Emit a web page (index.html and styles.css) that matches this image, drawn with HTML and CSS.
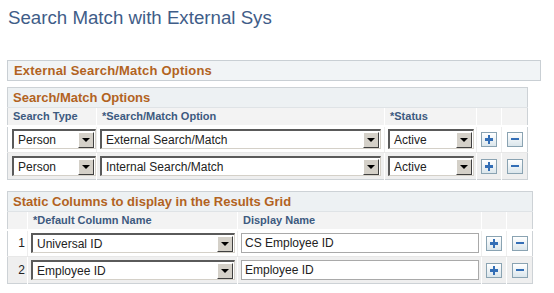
FILE: index.html
```html
<!DOCTYPE html>
<html lang="en">
<head>
    <meta charset="UTF-8">
    <title>Search Match with External Sys</title>
    <link rel="stylesheet" href="styles.css">
</head>
<body>
    <h1 class="page-title">Search Match with External Sys</h1>

    <!-- Group box -->
    <div class="group-box">
        <div class="group-title">External Search/Match Options</div>
    </div>

    <!-- Search/Match Options grid -->
    <table class="grid grid-options">
        <colgroup>
            <col style="width:89px">
            <col style="width:288px">
            <col style="width:92px">
            <col style="width:25px">
            <col style="width:26px">
        </colgroup>
        <tr class="grid-head">
            <th colspan="5">Search/Match Options</th>
        </tr>
        <tr class="col-head">
            <td>Search Type</td>
            <td>*Search/Match Option</td>
            <td>*Status</td>
            <td></td>
            <td></td>
        </tr>
        <tr class="row odd">
            <td><div class="select w-type"><span>Person</span><i class="drop"></i></div></td>
            <td><div class="select w-option"><span>External Search/Match</span><i class="drop"></i></div></td>
            <td><div class="select w-status"><span>Active</span><i class="drop"></i></div></td>
            <td><span class="btn plus"></span></td>
            <td><span class="btn minus"></span></td>
        </tr>
        <tr class="row even">
            <td><div class="select w-type"><span>Person</span><i class="drop"></i></div></td>
            <td><div class="select w-option"><span>Internal Search/Match</span><i class="drop"></i></div></td>
            <td><div class="select w-status"><span>Active</span><i class="drop"></i></div></td>
            <td><span class="btn plus"></span></td>
            <td><span class="btn minus"></span></td>
        </tr>
    </table>

    <!-- Static columns grid -->
    <table class="grid grid-columns">
        <colgroup>
            <col style="width:20px">
            <col style="width:210px">
            <col style="width:244px">
            <col style="width:25px">
            <col style="width:26px">
        </colgroup>
        <tr class="grid-head">
            <th colspan="5">Static Columns to display in the Results Grid</th>
        </tr>
        <tr class="col-head">
            <td></td>
            <td>*Default Column Name</td>
            <td>Display Name</td>
            <td></td>
            <td></td>
        </tr>
        <tr class="row odd">
            <td class="num">1</td>
            <td><div class="select w-column"><span>Universal ID</span><i class="drop"></i></div></td>
            <td><div class="text-input">CS Employee ID</div></td>
            <td><span class="btn plus"></span></td>
            <td><span class="btn minus"></span></td>
        </tr>
        <tr class="row even">
            <td class="num">2</td>
            <td><div class="select w-column"><span>Employee ID</span><i class="drop"></i></div></td>
            <td><div class="text-input">Employee ID</div></td>
            <td><span class="btn plus"></span></td>
            <td><span class="btn minus"></span></td>
        </tr>
    </table>
</body>
</html>
```

FILE: styles.css
```css
* {
    margin: 0;
    padding: 0;
    box-sizing: border-box;
}

body {
    background: #ffffff;
    font-family: "Liberation Sans", Arial, sans-serif;
    color: #000;
    width: 554px;
    height: 293px;
    overflow: hidden;
}

.page-title {
    font-size: 18.7px;
    font-weight: normal;
    color: #3f5d88;
    padding: 7px 0 0 8px;
    height: 60px;
}

/* Group box */
.group-box {
    margin-left: 7px;
    width: 534px;
    height: 21px;
    border: 1px solid #c9cfd4;
    background: #f1f4f6;
}

.group-title {
    font-size: 13px;
    font-weight: bold;
    color: #b2631f;
    padding: 2px 0 0 6px;
    letter-spacing: 0.2px;
}

/* Grids */
.grid {
    border-collapse: collapse;
    table-layout: fixed;
    margin-left: 7px;
    border: 1px solid #cdd2d6;
}

.grid-options {
    width: 521px;
    margin-top: 6px;
}

.grid-columns {
    width: 526px;
    margin-top: 11px;
}

.grid td {
    padding: 0;
    border-left: 1px solid #ffffff;
    vertical-align: middle;
}

.grid td:first-child {
    border-left: none;
}

.grid-head th {
    height: 20px;
    text-align: left;
    font-size: 13px;
    font-weight: bold;
    color: #b2631f;
    background: #edf1f3;
    padding: 0 0 0 5px;
    border-bottom: 1px solid #dfe3e6;
}

.col-head td {
    height: 18px;
    font-size: 11px;
    font-weight: bold;
    color: #3d5a7f;
    background: #f3f3f3;
    padding-left: 5px;
    border-bottom: 2px solid #ffffff;
}

.row td {
    height: 27px;
}

.row.odd td {
    background: #ffffff;
    border-left-color: #eeeeee;
    border-bottom: 1px solid #e8e8e8;
}

.row.even td {
    background: #efefef;
    border-left-color: #ffffff;
}

.grid-options .row td:first-child {
    padding-left: 4px;
}

.row td.num {
    text-align: right;
    padding-right: 2px;
    font-size: 12px;
    color: #222;
}

/* Dropdowns */
.select {
    display: flex;
    align-items: center;
    height: 20px;
    margin-left: 3px;
    background: #ffffff;
    border-top: 2px solid #5a5a5a;
    border-left: 2px solid #5a5a5a;
    border-right: 1px solid #d4d0c8;
    border-bottom: 1px solid #d4d0c8;
    font-size: 12px;
    color: #222;
}

.grid-options .row td:first-child .select {
    margin-left: 0;
}

.select span {
    flex: 1;
    padding-left: 4px;
    white-space: nowrap;
    overflow: hidden;
}

.select .drop {
    width: 16px;
    height: 16px;
    margin-right: 1px;
    background: #d4d0c8;
    border-top: 1px solid #ffffff;
    border-left: 1px solid #ffffff;
    border-right: 1px solid #404040;
    border-bottom: 1px solid #404040;
    display: flex;
    align-items: center;
    justify-content: center;
}

.select .drop::after {
    content: "";
    border-left: 4px solid transparent;
    border-right: 4px solid transparent;
    border-top: 4px solid #000;
    margin-top: 1px;
}

.w-type { width: 84px; }
.w-option { width: 281px; }
.w-status { width: 86px; }
.w-column { width: 204px; }

/* Text input */
.text-input {
    height: 20px;
    width: 238px;
    margin-left: 3px;
    border: 1px solid #a9a9a9;
    background: #fff;
    font-size: 12px;
    color: #222;
    padding: 2px 0 0 3px;
    white-space: nowrap;
}

/* Row buttons */
.btn {
    display: block;
    position: relative;
    width: 16px;
    height: 15px;
    margin: 0 auto;
    border: 1px solid #8aa3b2;
    background: linear-gradient(#ffffff, #dbe6ec);
}

.btn::before,
.btn::after {
    content: "";
    position: absolute;
    background: #336eb6;
}

.btn.plus::before {
    left: 3px;
    top: 5px;
    width: 8px;
    height: 3px;
}

.btn.plus::after {
    left: 6px;
    top: 2px;
    width: 2px;
    height: 9px;
}

.btn.minus::before {
    left: 3px;
    top: 5px;
    width: 8px;
    height: 2px;
}

.btn.minus::after {
    display: none;
}
```
